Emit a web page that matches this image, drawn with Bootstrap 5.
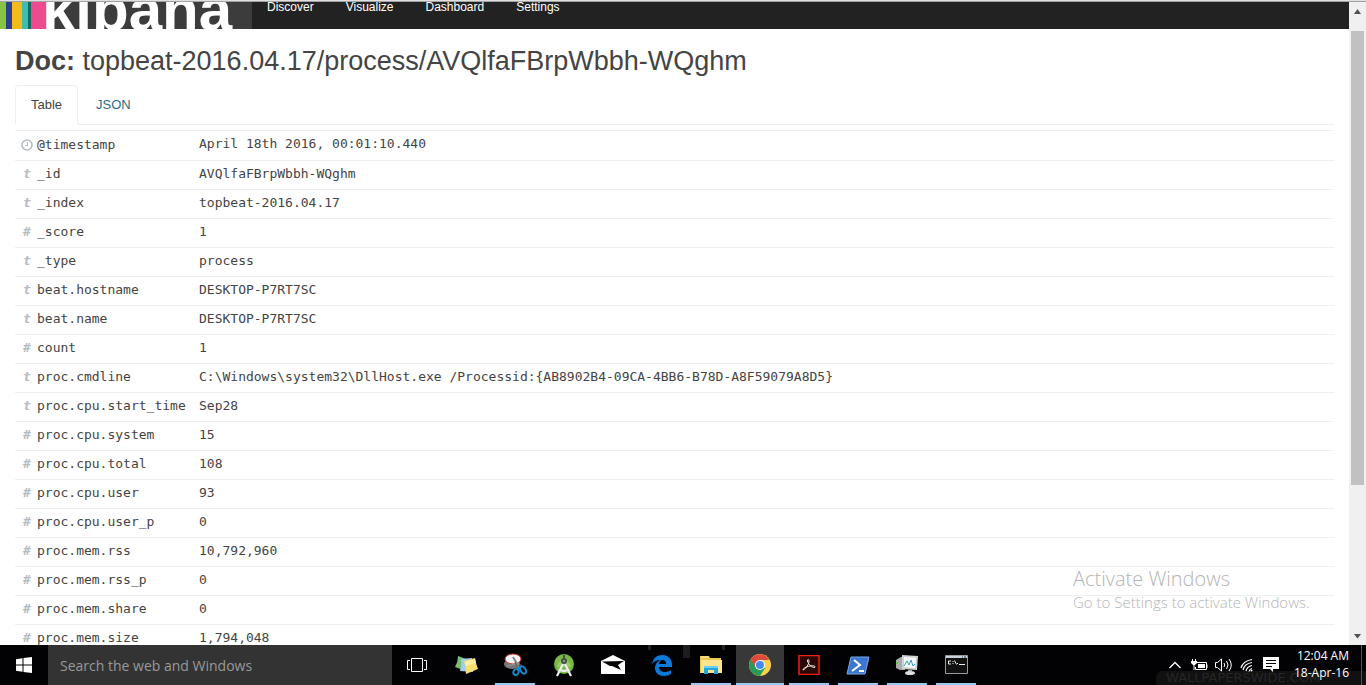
<!DOCTYPE html>
<html lang="en">
<head>
<meta charset="utf-8">
<meta name="viewport" content="width=device-width, initial-scale=1">
<title>Kibana - Doc</title>
<link href="https://cdn.jsdelivr.net/npm/bootstrap@5.3.0/dist/css/bootstrap.min.css" rel="stylesheet">
<style>
  body { font: 13px/18px "Liberation Sans", Arial, sans-serif; color: #444; background: #fff; }
  .chrome-edge { height: 2px; background: #e0e0e0; border-bottom: 1px solid #a3a3a3; }
  .top-nav { height: 27px; background: #222; }
  .brand-box { width: 252px; background: #3c3c3c; }
  .stripes { width: 46px; flex: none; background: linear-gradient(90deg, #86c440 6px, #2b3f8f 6px 12px, #f5bb1b 12px 22px, #3ebeb0 22px 28px, #0f6b60 28px 31px, #ee4a8e 31px); }
  .brand-word { font-size: 60px; line-height: 60px; font-weight: 700; color: #fff; margin: -22px 0 0 -4px; }
  .top-nav .nav { gap: 2px; }
  .top-nav .nav-link { font-size: 12px; line-height: 14px; padding: 0 15px; color: #fff; margin-top: -2px; }
  .doc-title { font-size: 27px; line-height: 30px; color: #444; padding-top: 17px; margin-bottom: 9px; }
  .doc-tabs { --bs-nav-tabs-border-color: #ecf0f1; --bs-nav-tabs-link-active-border-color: #ecf0f1; --bs-nav-tabs-link-active-color: #444; --bs-nav-tabs-border-radius: 4px; margin-bottom: 5px; }
  .doc-tabs .nav-link { padding: 10px 15px; margin-right: 2px; color: #2f6a8a; }
  .doc-tabs .nav-item:first-child .nav-link { border-color: #ecf0f1 #ecf0f1 #fff; }
  .doc-tabs .nav-link.active { color: #444; }
  .doc-table { width: 100%; font-family: "DejaVu Sans Mono", monospace; font-size: 13px; line-height: 18px; color: #444; }
  .doc-table th, .doc-table td { font-weight: 400; padding: 4px 5px 6px; border-top: 1px solid #ecf0f1; white-space: nowrap; vertical-align: top; }
  .doc-table th { width: 179px; }
  .doc-table tr:first-child th { padding: 5px 5px 6px; }
  .kind { display: inline-block; width: 14px; margin-right: 3px; color: #b4bcc2; font-weight: 700; text-align: center; line-height: 18px; }
  .scroll-track { width: 17px; background: #f0f0f0; padding: 7px 2px 6px; }
  .scroll-thumb { background: #c1c1c1; margin-top: 17px; height: 72%; }
  .activate { right: 40px; bottom: 33px; width: 253px; color: #b4b4b4; font-family: "Open Sans", sans-serif; font-weight: 300; }
  .activate-head { font-size: 20px; line-height: 26px; }
  .activate-sub { font-size: 15px; line-height: 20px; white-space: nowrap; }
  .taskbar { height: 40px; background: #020204; font-family: "Open Sans", sans-serif; }
  .start-btn, .task-btn { width: 48px; height: 40px; padding: 0; border: 0; background: none; color: #fff; border-radius: 0; flex: none; }
  .search-box { width: 344px; border: 0; background: #333; color: #999; font-size: 14px; padding: 2px 12px 0; border-radius: 0; }
  .search-box::placeholder { color: #999; opacity: 1; }
  .task-list { gap: 1px; padding-left: 1px; background: linear-gradient(#222, #222) 256px 0/3px 5px no-repeat, linear-gradient(#1c1c1c, #1c1c1c) 291px 0/7px 13px no-repeat, linear-gradient(#222, #222) 330px 0/3px 5px no-repeat; }
  .task-btn.running { background: linear-gradient(#99c8f5, #99c8f5) center bottom/40px 2px no-repeat; }
  .task-btn.current { background: linear-gradient(#99c8f5, #99c8f5) center bottom/48px 2px no-repeat #383838; }
  .tray-btn { border: 0; padding: 0; background: none; width: 24px; color: #fff; }
  .clock { width: 66px; font-size: 12px; line-height: 17px; color: #fff; margin-right: 12px; padding-bottom: 2px; }
  .peek { width: 5px; border-left: 1px solid #555; }
  .wall-mark { right: 0; bottom: 0; width: 210px; background: #111; border-radius: 6px 0 0 0; color: #262626; font: 400 13px/14px "DejaVu Sans", sans-serif; padding-left: 10px; white-space: nowrap; }
  .tray { z-index: 1; }
  svg { display: block; }
  .kind svg { display: inline-block; vertical-align: -2px; }
</style>
</head>
<body>
<div class="vh-100 d-flex flex-column overflow-hidden">
  <div class="chrome-edge flex-shrink-0"></div>
  <div class="d-flex flex-grow-1 overflow-hidden position-relative">
    <main class="flex-grow-1 overflow-hidden">
      <nav class="top-nav d-flex overflow-hidden">
        <a href="#" class="brand-box d-flex text-decoration-none" aria-label="kibana"><span class="stripes"></span><span class="brand-word">kibana</span></a>
        <div class="nav">
          <a class="nav-link" href="#">Discover</a>
          <a class="nav-link" href="#">Visualize</a>
          <a class="nav-link" href="#">Dashboard</a>
          <a class="nav-link" href="#">Settings</a>
        </div>
      </nav>
      <div class="container-fluid" style="--bs-gutter-x: 30px">
        <h1 class="doc-title fw-normal"><b>Doc:</b> topbeat-2016.04.17/process/AVQlfaFBrpWbbh-WQghm</h1>
        <ul class="nav nav-tabs doc-tabs">
          <li class="nav-item"><a class="nav-link active" href="#">Table</a></li>
          <li class="nav-item"><a class="nav-link" href="#">JSON</a></li>
        </ul>
        <table class="doc-table">
          <tbody>
            <tr><th scope="row"><span class="kind"><svg width="12" height="12" viewBox="0 0 12 12" fill="none" stroke="#b4bcc2"><circle cx="6" cy="6" r="5" stroke-width="1.6"/><path d="M6.500 3v3.500H4" stroke-width="1.1"/></svg></span>@timestamp</th><td>April 18th 2016, 00:01:10.440</td></tr>
            <tr><th scope="row"><i class="kind">t</i>_id</th><td>AVQlfaFBrpWbbh-WQghm</td></tr>
            <tr><th scope="row"><i class="kind">t</i>_index</th><td>topbeat-2016.04.17</td></tr>
            <tr><th scope="row"><i class="kind">#</i>_score</th><td>1</td></tr>
            <tr><th scope="row"><i class="kind">t</i>_type</th><td>process</td></tr>
            <tr><th scope="row"><i class="kind">t</i>beat.hostname</th><td>DESKTOP-P7RT7SC</td></tr>
            <tr><th scope="row"><i class="kind">t</i>beat.name</th><td>DESKTOP-P7RT7SC</td></tr>
            <tr><th scope="row"><i class="kind">#</i>count</th><td>1</td></tr>
            <tr><th scope="row"><i class="kind">t</i>proc.cmdline</th><td>C:\Windows\system32\DllHost.exe /Processid:{AB8902B4-09CA-4BB6-B78D-A8F59079A8D5}</td></tr>
            <tr><th scope="row"><i class="kind">t</i>proc.cpu.start_time</th><td>Sep28</td></tr>
            <tr><th scope="row"><i class="kind">#</i>proc.cpu.system</th><td>15</td></tr>
            <tr><th scope="row"><i class="kind">#</i>proc.cpu.total</th><td>108</td></tr>
            <tr><th scope="row"><i class="kind">#</i>proc.cpu.user</th><td>93</td></tr>
            <tr><th scope="row"><i class="kind">#</i>proc.cpu.user_p</th><td>0</td></tr>
            <tr><th scope="row"><i class="kind">#</i>proc.mem.rss</th><td>10,792,960</td></tr>
            <tr><th scope="row"><i class="kind">#</i>proc.mem.rss_p</th><td>0</td></tr>
            <tr><th scope="row"><i class="kind">#</i>proc.mem.share</th><td>0</td></tr>
            <tr><th scope="row"><i class="kind">#</i>proc.mem.size</th><td>1,794,048</td></tr>
          </tbody>
        </table>
      </div>
    </main>
    <div class="scroll-track d-flex flex-column flex-shrink-0 align-items-center">
      <svg width="7" height="5" class="flex-shrink-0"><path d="M0 5 3.500 0 7 5z" fill="#505050"/></svg>
      <div class="scroll-thumb w-100"></div>
      <svg width="7" height="5" class="mt-auto flex-shrink-0"><path d="M0 0 3.500 4.500 7 0z" fill="#505050"/></svg>
    </div>
    <div class="activate position-absolute">
      <div class="activate-head">Activate Windows</div>
      <div class="activate-sub">Go to Settings to activate Windows.</div>
    </div>
  </div>

  <footer class="taskbar d-flex flex-shrink-0 position-relative">
    <button class="start-btn d-flex align-items-center justify-content-center" aria-label="Start"><svg width="16" height="16" viewBox="0 0 16 16" fill="#fff"><path d="M0 2.200 6.500 1.300V7.500H0zM7.500 1.100 16 0V7.500H7.500zM0 8.500H6.500V14.700L0 13.800zM7.500 8.500H16V16L7.500 14.900z"/></svg></button>
    <input class="search-box" type="text" placeholder="Search the web and Windows" aria-label="Search the web and Windows">
    <div class="task-list d-flex">
      <button class="task-btn d-flex align-items-center justify-content-center" aria-label="Task View"><svg width="20" height="16" viewBox="0 0 20 16" fill="none" stroke="#fff"><path d="M4.500 1.500h11v13h-11zM3 3.500H.5v9H3M17 3.500h2.500v9H17"/></svg></button>
      <button class="task-btn d-flex align-items-center justify-content-center" aria-label="Sticky Notes"><svg width="26" height="22" viewBox="0 0 26 22"><path d="M5 2 16 6 13 17 2 13Q5 8 5 2" fill="#79bf72"/><path d="M8 5 19 4 20 18 7 17Q9 11 8 5" fill="#9fcdf1"/><path d="M11 7 22 4Q23 10 25 15L13 20Q13 13 11 7" fill="#f8df72"/><path d="M12 8 22 5 23 9 13 12" fill="#fff0a0"/></svg></button>
      <button class="task-btn running d-flex align-items-center justify-content-center" aria-label="Snipping Tool"><svg width="24" height="24" viewBox="0 0 24 24"><ellipse cx="9" cy="11" rx="8" ry="5" fill="#777"/><ellipse cx="10" cy="6" rx="8" ry="5" fill="#f4f4f4" stroke="#d32b32"/><path d="m10 4 7 12" stroke="#888" stroke-width="2"/><path d="m4 13 12-3" stroke="#999"/><path d="m12 9 4 8 2-6" stroke="#555" fill="none"/><g fill="none" stroke="#1687c9" stroke-width="2"><ellipse cx="13" cy="19" rx="2.500" ry="3" transform="rotate(25 13 19)"/><ellipse cx="20" cy="17" rx="2.500" ry="4" transform="rotate(-35 20 17)"/><path d="M14 15h3"/></g></svg></button>
      <button class="task-btn d-flex align-items-center justify-content-center" aria-label="Android Studio"><svg width="22" height="24" viewBox="0 0 22 24"><circle cx="11" cy="11" r="10" fill="#77b943"/><path d="M4 14a7 7 0 0 1 14 0" fill="#94ca68"/><path d="M10 11 4 23M12 11l6 12M6 16q5 4 10 0" fill="none" stroke="#eee" stroke-width="2.200"/><path d="M11 5V2" stroke="#465148" stroke-width="2"/><circle cx="11" cy="8" r="3" fill="#465148"/><circle cx="11" cy="8" r="1" fill="#aaa"/></svg></button>
      <button class="task-btn d-flex align-items-center justify-content-center" aria-label="Mail"><svg width="24" height="20" viewBox="0 0 24 20"><path d="M0 6 12 0 24 6V19H0z" fill="#fff"/><path d="M1 6.500 23 6 17 10 20 15 11 11 9 11z" fill="#050505"/></svg></button>
      <button class="task-btn d-flex align-items-center justify-content-center" aria-label="Edge"><svg width="20" height="21" viewBox="0 0 20 21"><path d="M0 9C1 3 5 0 10.500 0 16 0 20 4 20 9.500V12H7c0 3 2.500 5 6 5 2 0 4-.6 6-1.700V19c-2 1.300-4 2-7 2-5 0-9-3-9-8 0-3 1.500-6 5-8C4.500 5 2 6.500 0 9M7 9h7c0-2.500-1.200-4-3.300-4S7.300 6.600 7 9" fill="#0b7ad9"/></svg></button>
      <button class="task-btn running d-flex align-items-center justify-content-center" aria-label="File Explorer"><svg width="22" height="20" viewBox="0 0 22 20"><path d="M0 1h9l1 2h11v15H0z" fill="#f0c84b"/><path d="M1 5h21v13H1z" fill="#fde48e"/><path d="M1 2h7" stroke="#fff3b5"/><path d="M4 19v-8h14v8h-4v-4H8v4z" fill="#24a6df"/><path d="M4 11h14v2H4z" fill="#6bd0f1"/></svg></button>
      <button class="task-btn current d-flex align-items-center justify-content-center" aria-label="Chrome"><svg width="22" height="22" viewBox="0 0 22 22"><circle cx="11" cy="11" r="11" fill="#fbd04b"/><path d="M11 11 1.500 5.500A11 11 0 0 0 11 22l5-8z" fill="#279b59"/><path d="M1.500 5.500A11 11 0 0 1 20.500 6H11L6.500 13.500z" fill="#dc4b3e"/><circle cx="11" cy="11" r="5" fill="#fff"/><circle cx="11" cy="11" r="4" fill="#4788ec"/></svg></button>
      <button class="task-btn running d-flex align-items-center justify-content-center" aria-label="Adobe Reader"><svg width="22" height="20" viewBox="0 0 22 20"><path d="M1 .5h20v19H1z" fill="#2a0808" stroke="#ed2010" stroke-width="1.500"/><path d="M5 15c3-1 6-6 6-9 0-2-2-2-1.500 0 1 4 5 7 7 6.500S16 10 12 11 5 13 5 15" fill="none" stroke="#eee"/></svg></button>
      <button class="task-btn running d-flex align-items-center justify-content-center" aria-label="PowerShell"><svg width="24" height="19" viewBox="0 0 24 19"><path d="M5 1h18l-4 17H1z" fill="#3c76d2" stroke="#7aa7e7"/><path d="m8 4 6 5-8 6M13 15h5" fill="none" stroke="#fff" stroke-width="2"/></svg></button>
      <button class="task-btn running d-flex align-items-center justify-content-center" aria-label="Task Manager"><svg width="24" height="22" viewBox="0 0 24 22"><path d="M1 6 6 3h4v13H5l-4-2z" fill="#a9aaa9"/><path d="M2 8v2" stroke="#5dc742" stroke-width="2"/><path d="m7 1 16 1-1 14-15-1z" fill="#d0d1d1"/><path d="m9 3 12 1-1 10-11-1z" fill="#f5fafc"/><path d="m9 12 3-5 2 4 2-5 2 6 2-2" fill="none" stroke="#379bc0"/><path d="M13 16h4v3h-4z" fill="#aaa"/><ellipse cx="15" cy="19" rx="5" ry="2" fill="#ddd"/></svg></button>
      <button class="task-btn running d-flex align-items-center justify-content-center" aria-label="Command Prompt"><svg width="23" height="20" viewBox="0 0 23 20"><path d="M.5.5h22v18H.5z" fill="#111" stroke="#999"/><path d="M1 1h21v2H1z" fill="#c9d1dc"/><path d="M17 2h1M19 2h2" stroke="#345"/><path d="M6 6H3.500v3H6M8 6v1M8 8v1M9.500 5.500l2 4M12 8l1 1M14 9.500h6" stroke="#eee" fill="none"/></svg></button>
    </div>
    <div class="wall-mark position-absolute" aria-hidden="true">WALLPAPERSWIDE.COM</div>
    <div class="tray d-flex align-items-center ms-auto position-relative">
      <button class="tray-btn d-flex justify-content-center" aria-label="Hidden icons"><svg width="12" height="8" viewBox="0 0 12 8"><path d="m.5 7 5.500-5.500L11.500 7" fill="none" stroke="#fff" stroke-width="1.300"/></svg></button>
      <button class="tray-btn d-flex justify-content-center" aria-label="Battery"><svg width="17" height="12" viewBox="0 0 17 12"><path d="M5 3.500h10.500v7H4.500V8M16 5.500V9" fill="none" stroke="#fff"/><path d="M7 5h7v4H7z" fill="#fff"/><path d="M1.500 0v2M4.500 0v2M3 6v5" stroke="#fff"/><path d="M0 2h6v2L4 6H2L0 4z" fill="#fff"/></svg></button>
      <button class="tray-btn d-flex justify-content-center" aria-label="Volume"><svg width="17" height="14" viewBox="0 0 17 14" fill="none" stroke="#fff"><path d="M.5 4.500h2L6.500 1v12l-4-3.500h-2zM9 5q1.500 2 0 4M11.500 3q3 4 0 8M14 1q4.500 6 0 12"/></svg></button>
      <button class="tray-btn d-flex justify-content-center" aria-label="Wi-Fi"><svg width="14" height="14" viewBox="0 0 14 14" fill="none" stroke="#fff" stroke-width="1.200"><path d="M1 10Q3 3 12 1.500M3 12Q4.500 5.500 12 4.500M6 13Q7 8.500 12 7.500M9 13.500Q9.500 11 12 10.500"/><circle cx="11.500" cy="12.500" r="1" fill="#fff" stroke="none"/></svg></button>
      <button class="tray-btn d-flex justify-content-center" aria-label="Notifications"><svg width="16" height="16" viewBox="0 0 16 16"><path d="M0 0h16v12H10v3L7 12H0z" fill="#fff"/><path d="M3 3.500h10M3 6.500h10M3 9.500h6" stroke="#050505"/></svg></button>
      <div class="clock text-end"><div>12:04 AM</div><div>18-Apr-16</div></div>
      <div class="peek align-self-stretch"></div>
    </div>
  </footer>
</div>
<script src="https://cdn.jsdelivr.net/npm/bootstrap@5.3.0/dist/js/bootstrap.bundle.min.js"></script>
</body>
</html>
